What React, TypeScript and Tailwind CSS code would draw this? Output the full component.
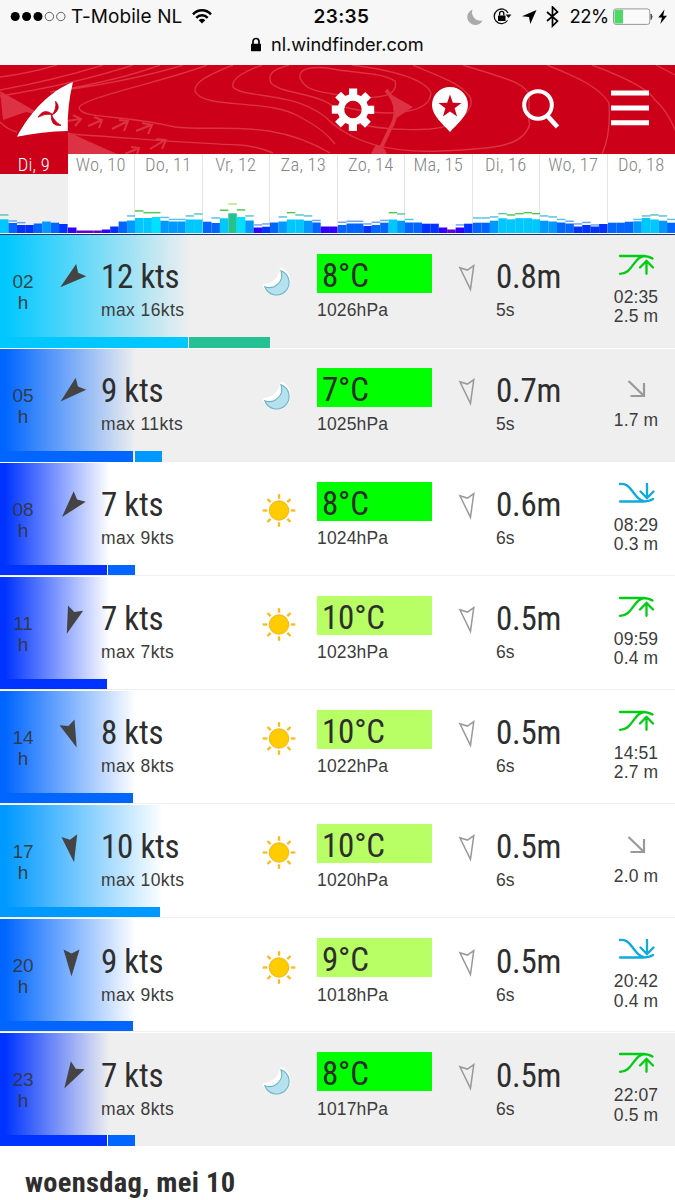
import React from "react";

const COND = "font-['Roboto_Condensed','Roboto',sans-serif] [font-stretch:75%]";
const BODY = "font-['Liberation_Sans',sans-serif] text-[#3c3c3c] whitespace-nowrap";

const P: Record<string, string> = {
  g: "#25c18f", c: "#00e0ff", a: "#00c8ff", s: "#0099ff", b: "#0066ff",
  d: "#0033ff", i: "#3300ff", p: "#6600cc",
  t: "#5fc7b5", l: "#6fa5ee", k: "#59c3e3", n: "#57c65a", y: "#b5ea6c",
};

// colour, bar height, gust height, gust colour
type Bar = [string, number, number?, string?];

const days: { name: string; bars: Bar[] }[] = [
  { name: "Di, 9", bars: [["a", 13.7, 18, "t"], ["b", 10, 12, "l"], ["d", 8, 10.3, "l"], ["d", 8], ["b", 9.5], ["s", 11.5], ["b", 10.3], ["d", 9]] },
  { name: "Wo, 10", bars: [["i", 5.5], ["p", 2.5], ["p", 2.5], ["p", 2.5], ["i", 3.5], ["d", 6.5], ["b", 11.5], ["s", 12.5, 17, "k"]] },
  { name: "Do, 11", bars: [["a", 15, 22, "n"], ["a", 15, 20.3, "n"], ["c", 16, 20.3, "n"], ["s", 12.3, 15.5, "k"], ["s", 11.5, 13.5, "k"], ["s", 11.5, 13.5, "k"], ["a", 13.5, 17, "k"], ["a", 13.5, 19, "t"]] },
  { name: "Vr, 12", bars: [["b", 11.3], ["b", 10, 15, "k"], ["a", 14.7, 22.7, "n"], ["g", 19.7, 29, "y"], ["c", 16, 23, "n"], ["s", 12.5, 17, "k"], ["i", 5.5, 8, "l"], ["d", 6.3, 9, "l"]] },
  { name: "Za, 13", bars: [["b", 10.5], ["s", 11.5, 16, "k"], ["a", 13.5, 20.3, "n"], ["a", 13.5, 18, "t"], ["s", 12.3, 17, "k"], ["b", 10.5, 12.5, "l"], ["i", 6.5], ["i", 6.5]] },
  { name: "Zo, 14", bars: [["b", 8, 10.7, "l"], ["b", 9.5, 11.7, "l"], ["b", 9.5, 11.7, "l"], ["d", 7, 9, "l"], ["b", 8, 10.7, "l"], ["b", 10.3, 12.5, "l"], ["a", 13.5, 20.3, "n"], ["s", 12.3, 19, "t"]] },
  { name: "Ma, 15", bars: [["b", 10.5, 13.5, "k"], ["b", 10.5], ["d", 9.3], ["d", 9.3], ["i", 5.5], ["p", 3.5], ["i", 5.5, 8, "l"], ["d", 9.3]] },
  { name: "Di, 16", bars: [["b", 10.3, 15, "k"], ["b", 10.3, 15, "k"], ["s", 12.3, 16, "k"], ["a", 14.7, 19.3, "t"], ["a", 13.7, 18, "n"], ["a", 14.8, 19.3, "n"], ["a", 14.8, 20.3, "n"], ["a", 13.7, 19.3, "n"]] },
  { name: "Wo, 17", bars: [["s", 12.3, 17, "k"], ["s", 11.5, 16, "k"], ["b", 10.5, 13.5, "k"], ["b", 9.5, 11.7, "l"], ["d", 6.5, 9, "l"], ["d", 8, 10.5, "l"], ["d", 6.5, 8, "l"], ["d", 9]] },
  { name: "Do, 18", bars: [["b", 10.3], ["b", 10.3], ["b", 11.3], ["s", 11.7, 13.5, "k"], ["a", 15, 17, "k"], ["a", 13.5, 18, "t"], ["s", 12.3, 17, "k"], ["b", 10.3, 13.5, "k"]] },
];

type Row = {
  h: string; wind: string; max: string; rot: number; night?: boolean;
  bar: number; color: string; gust?: [number, string]; temp: string; tempColor: string;
  hpa: string; wave: string; period: string; tide: "high" | "low" | "falling"; time?: string; level: string;
};

const GREEN = "#00ff00";
const LIME = "#b8ff66";

const rows: Row[] = [
  { h: "02", wind: "12 kts", max: "max 16kts", rot: 51, night: true, bar: 187.5, color: "#00c8ff", gust: [80, "#25c192"], temp: "8°C", tempColor: GREEN, hpa: "1026hPa", wave: "0.8m", period: "5s", tide: "high", time: "02:35", level: "2.5 m" },
  { h: "05", wind: "9 kts", max: "max 11kts", rot: 49, night: true, bar: 133, color: "#0066ff", gust: [26, "#0099ff"], temp: "7°C", tempColor: GREEN, hpa: "1025hPa", wave: "0.7m", period: "5s", tide: "falling", level: "1.7 m" },
  { h: "08", wind: "7 kts", max: "max 9kts", rot: 41, bar: 106.5, color: "#0033ff", gust: [26, "#0066ff"], temp: "8°C", tempColor: GREEN, hpa: "1024hPa", wave: "0.6m", period: "6s", tide: "low", time: "08:29", level: "0.3 m" },
  { h: "11", wind: "7 kts", max: "max 7kts", rot: 19, bar: 106.5, color: "#0033ff", temp: "10°C", tempColor: LIME, hpa: "1023hPa", wave: "0.5m", period: "6s", tide: "high", time: "09:59", level: "0.4 m" },
  { h: "14", wind: "8 kts", max: "max 8kts", rot: -21, bar: 133, color: "#0066ff", temp: "10°C", tempColor: LIME, hpa: "1022hPa", wave: "0.5m", period: "6s", tide: "high", time: "14:51", level: "2.7 m" },
  { h: "17", wind: "10 kts", max: "max 10kts", rot: -10, bar: 160, color: "#0099ff", temp: "10°C", tempColor: LIME, hpa: "1020hPa", wave: "0.5m", period: "6s", tide: "falling", level: "2.0 m" },
  { h: "20", wind: "9 kts", max: "max 9kts", rot: 0, bar: 133, color: "#0066ff", temp: "9°C", tempColor: LIME, hpa: "1018hPa", wave: "0.5m", period: "6s", tide: "low", time: "20:42", level: "0.4 m" },
  { h: "23", wind: "7 kts", max: "max 8kts", rot: 30, night: true, bar: 106.5, color: "#0033ff", gust: [26, "#0066ff"], temp: "8°C", tempColor: GREEN, hpa: "1017hPa", wave: "0.5m", period: "6s", tide: "high", time: "22:07", level: "0.5 m" },
];

function StatusBar() {
  return (
    <div className="h-[65px] shrink-0 bg-[#f7f7f7] font-['Inter',sans-serif] text-[#0a0a0a]">
      <div className="flex h-[33px] items-center">
        <svg className="ml-[10px] mt-px h-3 w-[56px] shrink-0" viewBox="0 0 56 12">
          {[5.2, 16.6, 28].map((x) => <circle key={x} cx={x} cy="5.5" r="4.5" fill="#000" />)}
          {[39.4, 50.8].map((x) => <circle key={x} cx={x} cy="5.5" r="4.2" fill="none" stroke="#222" strokeWidth=".7" />)}
        </svg>
        <span className="ml-[5px] w-[120px] shrink-0 whitespace-nowrap text-[19px] leading-[33px] tracking-[0.08px]">T-Mobile NL</span>
        <svg className="h-[17px] w-[22px] shrink-0" viewBox="0 0 22 17" fill="none" stroke="#000" strokeWidth="2.5">
          <path d="M2 6.3C7 1 15 1 20 6.3" />
          <path d="M5.3 9.8C8.5 6.4 13.5 6.4 16.7 9.8" />
          <path d="M11 15.6L7.7 12.2C9.6 10.4 12.4 10.4 14.3 12.2Z" fill="#000" stroke="none" />
        </svg>
        <span className="ml-[100.5px] w-[60px] shrink-0 text-[19px] font-semibold leading-[33px] tracking-[0.35px]">23:35</span>
        <svg className="ml-[93.5px] h-[22px] w-[98px] shrink-0" viewBox="467 6 98 22">
          <path d="M472.5 9.5A8 8 0 1 0 482.5 20.5A8.5 8.5 0 0 1 472.5 9.5Z" fill="#aaa" />
          <path d="M508 13A7.3 7.3 0 1 0 507.5 20.5" fill="none" stroke="#111" strokeWidth="1.3" />
          <path d="M505.5 14.5H511.5L508.5 18Z" fill="#111" />
          <rect x="498" y="15.5" width="7.5" height="5.5" rx=".6" fill="#000" />
          <path d="M499.6 15.5V13.5A2.1 2.1 0 0 1 503.8 13.5V15.5" fill="none" stroke="#000" strokeWidth="1.3" />
          <path d="M536.5 10L522 16.3L529 17L530.3 24Z" fill="#000" />
          <path d="M547 12L557.5 21L552.5 26V7L557.5 12L547 21" fill="none" stroke="#000" strokeWidth="1.7" />
        </svg>
        <span className="ml-[4.5px] w-[41px] shrink-0 whitespace-nowrap text-[18.5px] leading-[33px] tracking-[-0.55px]">22%</span>
        <svg className="ml-[1.5px] h-[18px] w-[56px] shrink-0" viewBox="612 8 56 18">
          <rect x="613.5" y="8.9" width="36.3" height="15.5" rx="2.5" fill="#fafafa" stroke="#999" />
          <path d="M614.5 11.3Q614.5 9.7 616 9.7H623V23.6H616Q614.5 23.6 614.5 22Z" fill="#4cd964" />
          <path d="M651 14Q653.3 16.6 651 19.5Z" fill="#555" stroke="#555" />
          <path d="M664.5 9.5L658.3 17.6H662L660.3 24L667 15.7H663.2Z" fill="#000" />
        </svg>
      </div>
      <div className="flex h-[23px] items-center">
        <svg className="ml-[250px] h-4 w-[12px]" viewBox="0 0 12 16">
          <rect x="1" y="6.7" width="10" height="7.5" rx=".6" />
          <path d="M3 7V4.5A3 3 0 0 1 9 4.500V7" fill="none" stroke="#000" strokeWidth="1.7" />
        </svg>
        <span className="ml-[9px] whitespace-nowrap text-[18.2px] leading-[23px] tracking-[-0.05px]">nl.windfinder.com</span>
      </div>
    </div>
  );
}

function Header() {
  return (
    <div className="h-[89px] shrink-0 bg-[#cc0019]">
      <svg className="block h-[89px] w-[675px]" viewBox="0 65 675 89">
        <g fill="none" stroke="#dc3243" strokeWidth="1.4">
          <path d="M0 77Q30 73 57 65M0 90Q55 80 103 65M0 96Q75 84 133 65M50 92Q120 80 160 65M65 90Q135 80 183 65" />
          <path d="M207 65C170 80 80 98 79 108C82 119 120 114 175 127C220 132 270 118 330 153" />
          <path d="M233 65C205 76 194 83 195 91C202 110 270 98 300 117Q325 130 335 144" />
          <path d="M262 65C240 73 231 80 233 87C245 100 300 89 333 124Q370 154 440 151C500 149 525 145 530 123" />
          <path d="M289 65C270 70 268 76 271 83C285 97 330 90 345 120Q380 132 430 129C465 126 475 105 470 97C460 82 435 75 413 65" />
          <path d="M300 78C298 67 315 66 333 69C360 74 380 72 395 81C399 96 380 100 345 96C320 92 305 91 300 78Z" />
          <path d="M352 65C390 70 425 78 431 93C430 113 390 119 340 106M463 65C500 77 530 83 529 98V123" />
          <path d="M547 65C580 78 600 88 609 103Q611 135 602 154M592 65Q648 86 655 100Q667 110 675 130M656 65L675 75" />
          <path d="M0 122Q8 130 17 132M68 134C130 138 200 144 240 145Q260 147 273 153" />
          <path d="M67 121L80 119M73 115L81 119L75 126M88 126L102 120M94 117L102 120L99 128M112 129L128 121M119 120L128 121L124 131M136 131L151 125M142 123L152 125L148 134M150 149L165 140M156 139L166 140L162 149M125 154L139 148M131 147L139 148L137 154" strokeWidth="2" />
          <path d="M386 90Q403 108 390 129L378 154" strokeWidth="4" />
        </g>
        <path d="M0 91L44 116L26 112L3 120ZM68 132L117 154H68ZM392 95L413 107L395 119ZM375 146Q383 143 387 154H371Z" fill="#dc3243" />
        <path d="M17 136.7C30 112 50 91 73 82Q67 106 67.8 131Q42 131.5 17 136.7Z" fill="#fff" />
        <path d="M51.8 115.3Q57 109 55.6 101.3Q62.5 109 51.8 115.3ZM52.5 114.3Q44.5 113.3 38 117.2Q44 107.5 52.5 114.3ZM51.3 114.3Q54.5 122 61 125.3Q50.5 127 51.3 114.3Z" fill="#cc0019" stroke="#cc0019" strokeWidth=".8" />
        <g fill="#fff">
          <path fillRule="evenodd" d="M353 94A15.5 15.5 0 1 0 353.01 94ZM353 100.8A8.7 8.7 0 1 1 352.99 100.8Z" />
          {[0, 45, 90, 135, 180, 225, 270, 315].map((a) => (
            <rect key={a} x="349" y="88.5" width="8.2" height="8.5" transform={`rotate(${a} 353 109.7)`} />
          ))}
          <path d="M450 132C444 125 432 116 432 105A18 18 0 0 1 468 105C468 116 456 125 450 132Z" />
        </g>
        <path d="M450 94.5L452.8 102.7L461.5 102.9L454.6 108.2L457.1 116.5L450 111.6L442.9 116.5L445.4 108.2L438.5 102.9L447.2 102.7Z" fill="#cc0019" />
        <circle cx="538" cy="105" r="13.8" fill="none" stroke="#fff" strokeWidth="4" />
        <path d="M547.5 116L557.5 127" stroke="#fff" strokeWidth="4.8" />
        <path d="M611 93H649M611 108H649M611 122.8H649" stroke="#fff" strokeWidth="5" />
      </svg>
    </div>
  );
}

function DayStrip() {
  return (
    <div className="flex h-[80.5px] shrink-0 border-b-[1.5px] border-[#173a63] bg-white">
      {days.map((day, n) => (
        <div key={day.name} className={`flex w-[67.5px] shrink-0 flex-col ${n === 0 ? "bg-[#efefef]" : n === 9 ? "" : "border-r border-[#e4e4e4]"}`}>
          <div className={`h-5 w-full whitespace-nowrap text-center text-[18.5px] font-light leading-[23.5px] tracking-[0.2px] ${COND} ${n === 0 ? "bg-[#cc0019] text-white" : "text-[#858585]"}`}>
            {day.name}
          </div>
          <svg className="-mr-px h-[59px] w-[67.5px]" viewBox="0 0 67.5 59" preserveAspectRatio="none">
            {day.bars.map(([c, h, g, gc], k) => (
              <g key={k}>
                <rect x={k * 8.44} y={59 - h} width="8.5" height={h} fill={P[c]} />
                {g && gc && <rect x={k * 8.44} y={59 - g - 0.8} width="8.5" height="1.5" fill={P[gc]} />}
              </g>
            ))}
          </svg>
        </div>
      ))}
    </div>
  );
}

function Moon() {
  return (
    <svg className="h-9 w-9" viewBox="-16.5 -17.5 36 36">
      <path d="M4 -13.5A13 13 0 1 1 -13.5 3Q1 1 4 -13.5Z" fill="#fff" stroke="#fff" strokeWidth="2.5" strokeLinejoin="round" />
      <path d="M3.5 -11.7A12.5 12.5 0 1 1 -12.7 4.2A12.5 12.5 0 0 0 3.5 -11.7Z" fill="#b5e2ee" stroke="#6cb2c6" strokeWidth="1.1" />
    </svg>
  );
}

function Sun() {
  return (
    <svg className="h-9 w-9" viewBox="-18 -17.5 36 36">
      <circle r="9.7" fill="#ffcc00" stroke="#f8b40f" strokeWidth="1" />
      {[0, 45, 90, 135, 180, 225, 270, 315].map((a) => (
        <path key={a} d="M0 -11.8V-16.3" stroke="#ffb819" strokeWidth="2.3" transform={`rotate(${a})`} />
      ))}
    </svg>
  );
}

function TideIcon({ kind }: { kind: Row["tide"] }) {
  if (kind === "falling")
    return (
      <svg className="h-[21px] w-[38px]" viewBox="0 0 38 21" fill="none" stroke="#999" strokeWidth="2.2">
        <path d="M11.5 2L26.5 16.5M27 4V17H13.5" />
      </svg>
    );
  return kind === "high" ? (
    <svg className="h-[21px] w-[38px]" viewBox="0 0 38 21" fill="none" stroke="#00cc14" strokeWidth="2.3" strokeLinecap="round">
      <path d="M3 2H25C30 2 33 3 35.5 4.5M3 19.8C10 19.8 13 15 16 11S21 3 27 2M29.5 19.8V7.5M23 13.5L29.5 7L36 13.5" />
    </svg>
  ) : (
    <svg className="h-[21px] w-[38px]" viewBox="0 0 38 21" fill="none" stroke="#11aadd" strokeWidth="2.3" strokeLinecap="round">
      <path d="M3 19.5H25C30 19.5 33 19 36 17M3 2C10 1 13 6 16 10S22 19 28 19.5M30 2V15M23.5 9.5L30 16L36.5 9.5" />
    </svg>
  );
}

function ForecastRow({ r }: { r: Row }) {
  const edge = r.night ? "#efefef" : "#ffffff";
  const fade = `linear-gradient(to right, ${r.color} 0, ${r.color} 5px, ${edge} ${r.bar + 3}px)`;
  return (
    <div className="flex h-[114.1px] shrink-0 flex-col border-b-[1.5px] border-white text-[#2e2e2e]">
      <div className="flex h-[102px] shrink-0" style={{ background: fade }}>
        <div className="w-[46px] shrink-0 pt-9 text-center font-['Liberation_Sans',sans-serif] text-[19px] leading-[21px] text-[#333]/90">
          <div>{r.h}</div>
          <div>h</div>
        </div>
        <div className="w-[55px] shrink-0 pt-[25px] pl-[7px]">
          <svg className="h-9 w-9" viewBox="-18.5 -18 36 36">
            <path d="M0 14.5L-8 -12.5L0 -8.5L8 -12.5Z" fill="#444" transform={`rotate(${r.rot})`} />
          </svg>
        </div>
        <div className="w-[159px] shrink-0 pt-[26.5px]">
          <div className={`whitespace-nowrap text-[33px] leading-[32px] tracking-[-0.25px] ${COND}`}>{r.wind}</div>
          <div className={`mt-[7px] text-[17.5px] leading-5 tracking-[0.4px] ${BODY}`}>{r.max}</div>
        </div>
        <div className="w-[57px] shrink-0 pt-[30.5px] pl-[1px]">{r.night ? <Moon /> : <Sun />}</div>
        <div className="w-[115px] shrink-0 pt-[19px]">
          <div className={`h-[39px] whitespace-nowrap pl-[5px] text-[33px] leading-[44px] tracking-[-0.2px] ${COND}`} style={{ background: r.tempColor }}>{r.temp}</div>
          <div className={`mt-[7.5px] text-[17.5px] leading-5 tracking-[0.15px] ${BODY}`}>{r.hpa}</div>
        </div>
        <div className="w-[64px] shrink-0 pt-[24.5px] pl-[18px]">
          <svg className="h-9 w-9" viewBox="-18.5 -18 36 36">
            <path d="M0 12.5L-7 -10.5L0 -7L7 -10.5Z" fill="none" stroke="#999" strokeWidth="1.5" transform="rotate(-9)" />
          </svg>
        </div>
        <div className="w-[100px] shrink-0 pt-[26.5px]">
          <div className={`whitespace-nowrap text-[33px] leading-[32px] tracking-[-0.25px] ${COND}`}>{r.wave}</div>
          <div className={`mt-[7px] text-[17.5px] leading-5 ${BODY}`}>{r.period}</div>
        </div>
        <div className={`flex w-[80px] shrink-0 flex-col items-center ${r.time ? "pt-[19px]" : "pt-[30px]"}`}>
          <TideIcon kind={r.tide} />
          <div className={`text-[17.5px] leading-[19.5px] tracking-[0.1px] ${BODY} ${r.time ? "mt-[13px]" : "mt-[11.5px]"}`}>
            {r.time && <div>{r.time}</div>}
            <div>{r.level}</div>
          </div>
        </div>
      </div>
      <div className={`flex flex-1 gap-[1.5px] ${r.night ? "bg-[#efefef]" : "border-b border-[#efefef] bg-white"}`}>
        <div style={{ width: r.bar, background: r.color }} />
        {r.gust && <div className="-ml-px border-l border-white" style={{ width: r.gust[0] + 2, background: r.gust[1] }} />}
      </div>
    </div>
  );
}

export default function App() {
  return (
    <div className="flex h-[1200px] w-[675px] flex-col overflow-hidden bg-white">
      <StatusBar />
      <Header />
      <DayStrip />
      {rows.map((r) => <ForecastRow key={r.h} r={r} />)}
      <h2 className={`ml-[25px] mt-[19px] whitespace-nowrap text-[28.5px] font-bold leading-[33px] tracking-[0.3px] text-[#2e2e2e] ${COND}`}>
        woensdag, mei 10
      </h2>
    </div>
  );
}
